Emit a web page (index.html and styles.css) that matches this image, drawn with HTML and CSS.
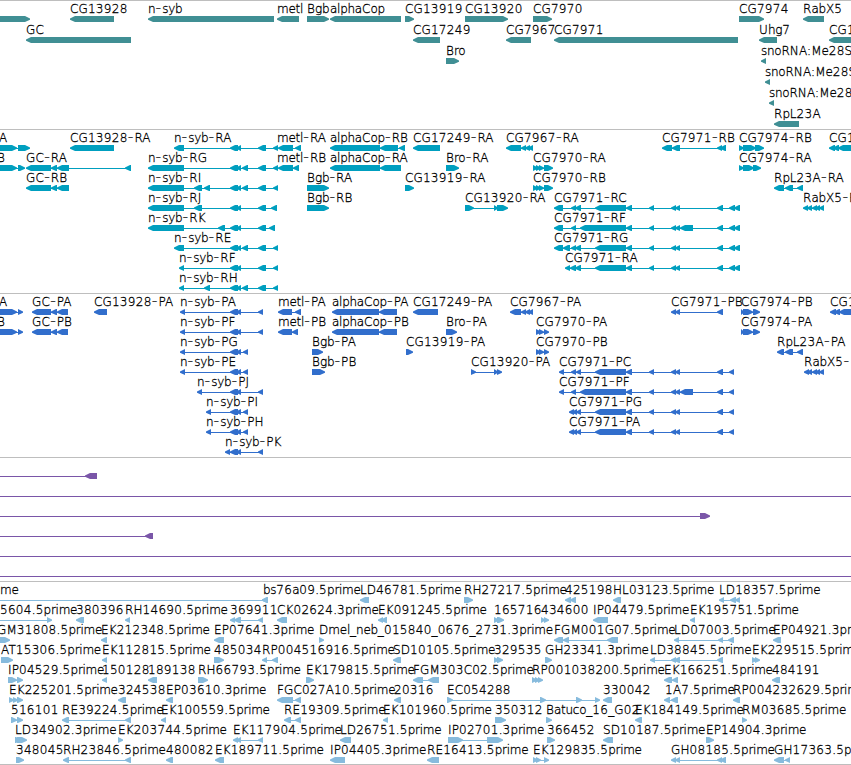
FILE: index.html
```html
<!DOCTYPE html>
<html lang="en">
<head>
  <meta charset="UTF-8" />
  <meta name="viewport" content="width=device-width, initial-scale=1" />
  <title>Genome Browser</title>
  <link rel="stylesheet" href="styles.css">
</head>
<body>

  <main class="browser" aria-label="Genome tracks">
    <section class="track genes" id="genes"></section>
    <section class="track transcripts" id="transcripts"></section>
    <section class="track proteins" id="proteins"></section>
    <section class="track insertions" id="insertions"></section>
    <section class="track ests" id="ests"></section>
  </main>

  <script src="tracks.js"></script>
</body>
</html>
```

FILE: styles.css
```css
body {
  margin: 0;
  background: #fff;
  overflow: hidden;
}
.browser {
  width: 851px;
  border-bottom: 1px solid #bebebe;
}
.track {
  box-sizing: border-box;
  border-top: 1px solid #bebebe;
  padding-bottom: 3px;
}
.row {
  display: block;
  width: 100%;
  height: 20px;
  overflow: visible;
}
.row text {
  font-family: "DejaVu Sans", sans-serif;
  font-size: 12px;
  font-weight: 200;
  letter-spacing: 0.1px;
  fill: #000;
  stroke: #000;
  stroke-width: 0.3px;
  white-space: pre;
}
.row .dash {
  font-size: 17px;
  letter-spacing: 0.7px;
  stroke: none;
}
.row .lower {
  letter-spacing: -0.27px;
}
.row .num {
  letter-spacing: 0.3px;
}

/* track colours */
.genes {
  color: #408f94;
  padding-bottom: 2px;
}
.genes .row {
  height: 21px;
}
.transcripts {
  color: #009fbf;
}
.proteins {
  color: #316ecc;
}
.insertions {
  color: #7a56a8;
}
.ests {
  color: #87bbdd;
  padding-bottom: 2px;
}
.row path,
.row rect {
  fill: currentColor;
}
```

FILE: tracks.js
```js
// One string per row. Features are split by ";":
//   label | strand | start-end start-end ... | label x (optional)
// Coordinates are in pixels of the current view.

const tail = "258,266 273,278";
const hub = "230,238 236,241";
const end7967 = "521,526 525,530 528,533";
const mid7971 = "626,632 649,654 671,676 675,680";
const rabx = "807,812 812,817 815,820 819,824";

const tracks = {
  genes: [
    "|>|-20,30;CG13928|<|70,114;n-syb|<|148,274;metl|<|277,299;Bgb|>|307,329;alphaCop|<|330,401;CG13919|>|405,414;CG13920|>|465,508;CG7970|>|533,552;CG7974|>|739,764;RabX5|<|803,824",
    "GC|<|26,131;CG17249|<|413,440;CG7967|<|506,531;CG7971|<|554,738;Uhg7|<|759,777;CG1|<|829,870",
    "Bro|>|446,459;snoRNA:Me28S-|<|761,766",
    "snoRNA:Me28S|<|765,770",
    "snoRNA:Me28|<|769,774",
    "RpL23A|<|774,799"
  ],
  transcripts: [
    `A|>|-20,17 18,30|-1;CG13928-RA|<|70,114;n-syb-RA|<|174,184 ${hub} ${tail};metl-RA|<|278,293 295,301|277;alphaCop-RB|<|330,380 380,398 399,405;CG17249-RA|<|413,440;CG7967-RA|<|506,521 ${end7967};CG7971-RB|<|662,672 672,680 717,722 720,726;CG7974-RB|>|739,744 743,756 755,764;CG1|<|829,835 833,839 838,870`,
    `B|>|-20,17 18,25|-3;GC-RA|<|26,51 51,57 57,69 125,131;n-syb-RG|<|148,184 ${hub} 242,248 ${tail};metl-RB|<|278,293 293,299|277;alphaCop-RA|<|330,380 380,401;Bro-RA|>|446,459;CG7970-RA|>|533,538 536,541 539,544 544,553;CG7974-RA|>|739,744 743,754 753,761`,
    `GC-RB|<|26,51 51,57 57,69;n-syb-RI|<|148,184 194,202 204,210 ${hub} 242,248 ${tail};Bgb-RA|>|307,329;CG13919-RA|>|405,414;CG7970-RB|>|533,538 536,541 539,544 544,553;RpL23A-RA|<|774,784 785,793 797,803`,
    `n-syb-RJ|<|148,184 194,202 ${hub} 258,266 271,277;Bgb-RB|>|307,329;CG13920-RA|>|465,474 494,498 497,508;CG7971-RC|<|554,563 571,576 575,581 595,626 ${mid7971} 717,723 729,735 734,740;RabX5-R|<|803,808 ${rabx}`,
    `n-syb-RK|<|148,184 218,225 ${hub} 258,266 269,275;CG7971-RF|<|554,563 571,576 580,626 ${mid7971} 680,693 717,723 729,735 734,740`,
    `n-syb-RE|<|174,184 ${hub} 242,248 ${tail};CG7971-RG|<|554,563 563,570 571,576 575,581 595,626 ${mid7971} 717,723 729,735 734,740`,
    `n-syb-RF|<|179,184 ${hub} ${tail};CG7971-RA|<|565,570 570,576 575,581 595,626 ${mid7971} 717,723 729,735 734,740`,
    `n-syb-RH|<|179,184 204,210 ${hub} 242,248 ${tail}`
  ],
  proteins: [
    `A|>|-20,17 18,23|-1;GC-PA|<|32,51 51,57 57,68;CG13928-PA|<|94,107;n-syb-PA|<|180,185 ${hub} 258,263;metl-PA|<|278,292 295,301;alphaCop-PA|<|332,379 379,397;CG17249-PA|<|413,438;CG7967-PA|<|510,521 ${end7967};CG7971-PB|<|671,676 675,680 717,723;CG7974-PB|>|741,744 743,753 753,760;CG1|<|830,836 834,840 839,870`,
    `B|>|-20,17 18,23|-3;GC-PB|<|32,51 51,57 57,68;n-syb-PF|<|180,185 ${hub} 258,263;metl-PB|<|278,292 292,298;alphaCop-PB|<|332,379 379,397;Bro-PA|>|446,457;CG7970-PA|>|536,541 539,544 544,549;CG7974-PA|>|741,744 743,753 753,760`,
    `n-syb-PG|<|180,185 ${hub} 243,248;Bgb-PA|>|312,323;CG13919-PA|>|406,413;CG7970-PB|>|536,541 539,544 544,549;RpL23A-PA|<|777,784 785,793 797,803`,
    `n-syb-PE|<|180,185 ${hub} 243,248;Bgb-PB|>|312,325;CG13920-PA|>|471,476 494,498 497,502;CG7971-PC|<|559,564 571,576 576,581 595,626 ${mid7971} 717,723 729,734;RabX5-|<|804,809 ${rabx}`,
    `n-syb-PJ|<|197,202 ${hub} 258,263;CG7971-PF|<|559,564 571,576 580,626 ${mid7971} 680,693 717,723 729,734`,
    `n-syb-PI|<|206,211 ${hub} 243,248;CG7971-PG|<|569,574 572,577 576,581 595,626 ${mid7971} 717,723 729,734`,
    `n-syb-PH|<|206,211 ${hub} 243,248;CG7971-PA|<|569,574 572,577 576,581 595,626 ${mid7971} 717,723 729,734`,
    `n-syb-PK|<|225,230 ${hub} 258,263`
  ],
  insertions: [
    "|<|-20,-10 85,97",
    "|<|-20,-10 870,880",
    "|>|-20,-10 700,710",
    "|<|-20,-10 145,153",
    "|<|-20,-10 870,880",
    "|<|-20,-10 870,880"
  ],
  ests: [
    "me|<|-20,-10 262,268|0;bs76a09.5prime|<|262,268|263;LD46781.5prime|<|360,369;RH27217.5prime|>|464,473;425198|<|565,571 570,576;HL03123.5prime|<|613,621;LD18357.5prime|<|719,724 730,736 735,740",
    "5604.5prime|>|-20,-10 47,52|0;380396|<|76,84;RH14690.5prime|<|125,130;369911|<|230,235 234,241 258,263;CK02624.3prime|<|277,287;EK091245.5prime|<|378,383 381,387;165716|>|494,499 497,504;434600|>|541,545 544,549;IP04479.5prime|<|593,608;EK195751.5prime|<|690,695",
    "GM31808.5prime|>|-10,10|-3;EK212348.5prime|<|101,107;EP07641.3prime|<|214,224;Dmel_neb_015840_0676_2731.3prime|>|319,324;FGM001G07.5prime|<|554,563 563,569 607,618;LD07003.5prime|<|674,679 718,723 728,734;EP04921.3pr|<|773,781",
    "AT15306.5prime|>|1,13;EK112815.5prime|<|102,107;485034|>|214,224;RP004516916.5prime|<|262,267 272,278;SD10105.5prime|<|393,401;329535|>|494,499 497,503;GH23341.3prime|>|545,552;LD38845.5prime|<|650,655 671,676 674,680 717,723;EK229515.5prim|>|752,757 755,760|752",
    "IP04529.5prime|>|8,17 17,23;150128|<|102,107;189138|<|148,157;RH66793.5prime|>|198,208;EK179815.5prime|>|306,314;FGM303C02.5prime|<|413,423 428,439;RP001038200.5prime|>|532,537 535,540 538,543;EK166251.5prime|<|664,672 672,678;484191|<|772,780",
    "EK225201.5prime|>|9,14 13,18 17,23;324538|<|118,126;EP03610.3prime|<|166,173;FGC027A10.5prime|<|277,293 295,301;20316|<|394,401;EC054288|>|447,453 540,546 576,582 595,600;330042|<|603,612;1A7.5prime|<|664,670 671,678|665;RP004232629.5prim|<|733,740",
    "516101|>|11,17 17,23;RE39224.5prime|<|62,69 125,131;EK100559.5prime|<|161,166;RE19309.5prime|<|284,291 295,301;EK101960.5prime|<|383,388;350312|>|495,506;Batuco_16_G02|>|546,552;EK184149.5prime|<|635,642;RM03685.5prime|>|742,747",
    "LD34902.3prime|>|15,21 17,27;EK203744.5prime|>|118,123;EK117904.5prime|<|233,238 236,241 258,263;LD26751.5prime|<|340,351;IP02701.3prime|>|448,463 487,503;366452|>|547,555;SD10187.5prime|<|603,613;EP14904.3prime|>|706,714",
    "348045|>|16,24;RH23846.5prime|<|63,69 125,131;480082|<|166,173;EK189711.5prime|<|215,224;IP04405.3prime|<|330,345;RE16413.5prime|<|427,439;EK129835.5prime|>|533,538 536,541 544,549;GH08185.5prime|<|671,676 675,680 717,722 720,726;GH17363.5p|<|774,784 785,790"
  ]
};

const TOP = 15;
const MID = 18;
const BOTTOM = 21;

function arrow(start, end, strand) {
  const head = Math.min(5, end - start);
  // the point is one pixel high, not a sharp tip
  const tip = `${MID - 0.4}V${MID + 0.8}`;
  if (strand === "<") {
    return `<path d="M${start} ${tip}L${start + head} ${BOTTOM}H${end}V${TOP}H${start + head}Z"/>`;
  }
  return `<path d="M${end} ${tip}L${end - head} ${BOTTOM}H${start}V${TOP}H${end - head}Z"/>`;
}

function markup(label) {
  return label.replace(/[a-z]+|[0-9]+|-/g, run => {
    const kind = run === "-" ? "dash" : /[a-z]/.test(run) ? "lower" : "num";
    return `<tspan class="${kind}">${run}</tspan>`;
  });
}

function drawFeature(feature) {
  const [label, strand, blocks, labelX] = feature.split("|");
  const exons = blocks.split(" ").map(b => b.split(",").map(Number));
  const first = exons[0][0];
  const last = exons[exons.length - 1][1];
  let out = "";

  // intron line first, exons go over it
  if (exons.length > 1) {
    out += `<rect x="${first + 1}" y="${MID}" width="${last - first - 2}" height="1"/>`;
  }
  out += exons.map(([a, b]) => arrow(a, b, strand)).join("");

  if (label) {
    out += `<text x="${labelX || first}" y="12">${markup(label)}</text>`;
  }
  return out;
}

for (const [id, rows] of Object.entries(tracks)) {
  document.getElementById(id).innerHTML = rows
    .map(row => `<svg class="row">${row.split(";").map(drawFeature).join("")}</svg>`)
    .join("");
}
```
